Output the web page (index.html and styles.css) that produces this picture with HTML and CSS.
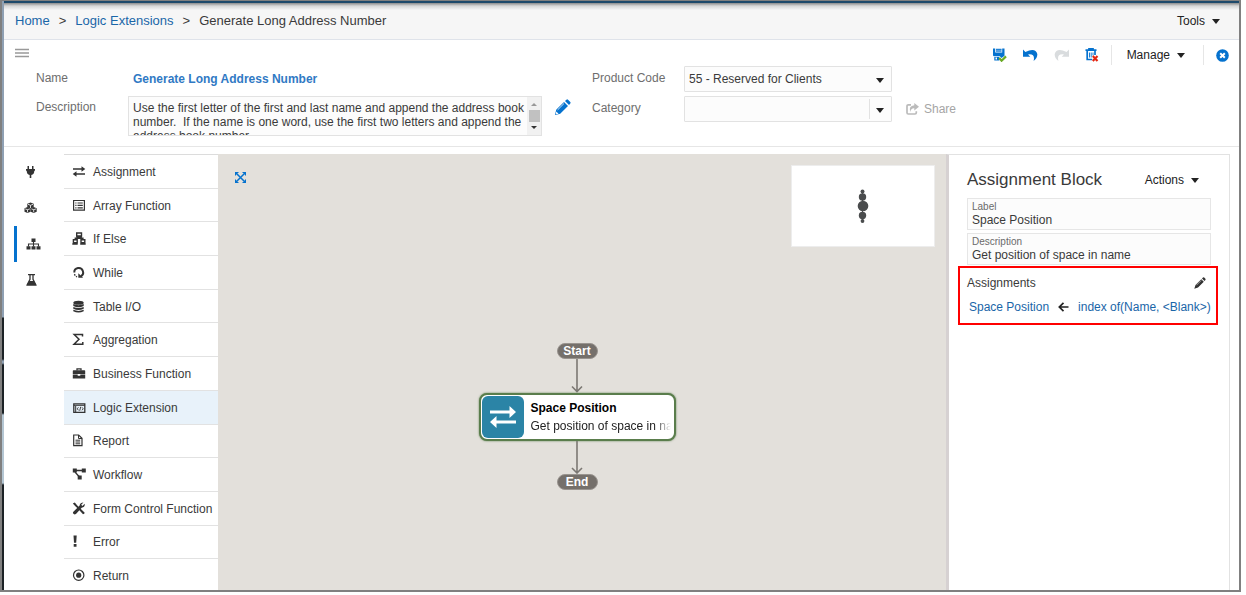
FILE: index.html
```html
<!DOCTYPE html>
<html lang="en">
<head>
<meta charset="utf-8">
<title>Logic Extensions</title>
<link rel="stylesheet" href="styles.css">
</head>
<body>
<div class="app">
  <header class="topbar">
    <nav class="crumbs" aria-label="Breadcrumb">
      <a href="#">Home</a><span class="sep">&gt;</span><a href="#">Logic Extensions</a><span class="sep">&gt;</span><span>Generate Long Address Number</span>
    </nav>
    <button class="menu-btn tools">Tools <i class="caret"></i></button>
  </header>

  <section class="details">
    <button class="icon-btn burger" aria-label="Menu"><svg width="14" height="10" viewBox="0 0 14 10"><path d="M0 1.500h14M0 5h14M0 8.500h14" stroke="#999" stroke-width="1.600"/></svg></button>
    <div class="fields">
      <span class="lbl">Name</span>
      <strong class="ext-name">Generate Long Address Number</strong>
      <label class="lbl" for="desc">Description</label>
      <div class="desc-row">
        <div class="desc-box">
          <textarea id="desc">Use the first letter of the first and last name and append the address book number.  If the name is one word, use the first two letters and append the address book number.</textarea>
          <div class="scroll" aria-hidden="true"><i class="up"></i><i class="thumb"></i><i class="down"></i></div>
        </div>
        <button class="icon-btn" aria-label="Edit description"><svg width="17" height="17" viewBox="0 0 17 17"><path d="M1 16l1.200-5.200L10 3l4 4-7.800 7.800zM11 2l1.400-1.300q.8-.7 1.600 0l2.300 2.300q.7.800 0 1.600L15 6z" fill="#0572ce"/><path d="M3.600 10.900L10 4.500" stroke="#fff" stroke-width=".8"/><path d="M2.300 12.400l2.300 2.300-2 .5-.8-.8z" fill="#fff"/></svg></button>
      </div>
    </div>
    <div class="codes">
      <label class="lbl" for="code">Product Code</label>
      <div class="sel"><select id="code"><option>55 - Reserved for Clients</option></select><i class="caret"></i></div>
      <label class="lbl" for="cat">Category</label>
      <div class="sel split"><select id="cat"><option></option></select><i class="caret"></i></div>
    </div>
    <button class="share"><svg width="13" height="12" viewBox="0 0 13 12"><path d="M5 1.900H2.300Q1 1.900 1 3.200V9.700Q1 11 2.300 11H9Q10.300 11 10.300 9.700V8.200" fill="none" stroke="#bbb" stroke-width="1.700"/><path d="M8.300 0L13 3.800 8.300 7.600V5.300Q5 5 4.300 9 2.200 3 8.300 2.300z" fill="#bbb"/></svg>Share</button>
    <div class="toolbar">
      <button class="icon-btn" aria-label="Save"><svg width="15" height="14" viewBox="0 0 15 14"><path d="M1 .5h2.200v4h7v-4h2.300v7.200L9.500 10 7.800 8.200H1.800L1 7.500z" fill="#0572ce"/><path d="M4 .5h5.500V4H4z" fill="#8fbfe8"/><path d="M4 1.500h5.500M4 3h5.500" stroke="#0572ce" stroke-width=".8"/><path d="M2.300 9h5v3.500h-5z" fill="#0572ce"/><path d="M3.500 9.500h1.500v2H3.500z" fill="#fff"/><path d="M7.200 10l2.400 2.700L14 8.400" fill="none" stroke="#6aaa25" stroke-width="2.200"/></svg></button>
      <button class="icon-btn" aria-label="Undo"><svg width="15" height="12" viewBox="0 0 15 12"><path d="M0 .500L2.400 2.900Q12.500-1.800 14.300 5 14.600 9 10.600 12 12.500 4.300 5 5.400L7.300 7.700H0z" fill="#0572ce"/></svg></button>
      <button class="icon-btn" aria-label="Redo" disabled><svg width="15" height="12" viewBox="0 0 15 12"><path d="M15 .500L12.600 2.900Q2.500-1.800.7 5 .4 9 4.400 12 2.500 4.300 10 5.400L7.700 7.700H15z" fill="#d9dcde"/></svg></button>
      <button class="icon-btn" aria-label="Delete"><svg width="14" height="14" viewBox="0 0 14 14"><path d="M.5 2.200h11M4 2V.7h4V2M2.200 2.500v9h5M10 2.500V7" fill="none" stroke="#0572ce" stroke-width="1.700"/><path d="M4.500 4.500v5M6.200 4.500v5M8 4.500v3" stroke="#0572ce" stroke-width=".9"/><path d="M7.800 8l4.700 5M12.500 8l-4.700 5" stroke="#e5250f" stroke-width="2.100"/></svg></button>
      <button class="menu-btn manage">Manage <i class="caret"></i></button>
      <button class="icon-btn" aria-label="Close"><svg width="13" height="13" viewBox="0 0 13 13"><circle cx="6.500" cy="6.500" r="6.300" fill="#0572ce"/><path d="M4.200 4.200l4.600 4.600M8.800 4.200L4.200 8.800" stroke="#fff" stroke-width="2"/></svg></button>
    </div>
  </section>

  <main class="work">
    <nav class="rail" aria-label="Sections">
      <button aria-label="Connections"><svg width="16" height="16" viewBox="0 0 16 16"><path d="M4.500 2H6v3.500H4.500zM9 2h1.500v3.500H9zM3 5h9v1.700h-.7q0 3.600-3 4.400V14H6.700v-2.900q-3-.8-3-4.400H3z" fill="#333"/></svg></button>
      <button aria-label="Objects"><svg width="16" height="16" viewBox="0 0 16 16"><g fill="#333"><path d="M7.500 2.500l3.200 1.200v3.600L7.500 8.700 4.300 7.300V3.700z"/><path d="M4.500 7l3.100 1.200v3.500L4.500 13l-3-1.300V8.200z"/><path d="M10.700 7l3 1.200v3.500L10.700 13l-3-1.300V8.200z"/></g><path d="M5 4.300l2.500 1 2.500-1M7.500 5.300V8M2.200 8.900l2.300.8 2.400-.8M4.500 9.700V12.300M8.400 8.900l2.300.8 2.300-.8M10.700 9.700v2.600" stroke="#fff" stroke-width=".8" fill="none"/></svg></button>
      <button class="on" aria-label="Logic"><svg width="16" height="16" viewBox="0 0 16 16"><path d="M6.500 2.500h4v3.500h-4zM1.500 10.200h4v3.300h-4zM6.500 10.200h4v3.300h-4zM11.500 10.200h4v3.300h-4z" fill="#333"/><path d="M8.500 6v4.500M3.500 10.500V8h10v2.500" fill="none" stroke="#333" stroke-width="1.100"/></svg></button>
      <button aria-label="Test"><svg width="16" height="16" viewBox="0 0 16 16"><path d="M5 2.600h7M7 3v4.300L4.200 12.900h8.600L10 7.300V3" fill="none" stroke="#333" stroke-width="1.300"/><path d="M6.100 9h4.800l2.600 4.500h-10z" fill="#333"/></svg></button>
    </nav>

    <ul class="blocks">
      <li><button><svg width="14" height="14" viewBox="0 0 14 14"><path d="M1 4h9M4 9h9" stroke="#333" stroke-width="1.700"/><path d="M9.500 1.200L13.300 4 9.500 6.800zM4.500 6.200L.7 9l3.800 2.800z" fill="#333"/></svg>Assignment</button></li>
      <li><button><svg width="14" height="14" viewBox="0 0 14 14"><path d="M1.600 1.500h10.800v9.600H1.600z" fill="none" stroke="#333" stroke-width="1.200"/><path d="M3.300 4h1.200M5.500 4h5.300M3.300 6.400h1.200M5.500 6.400h5.300M3.300 8.800h1.200M5.500 8.800h5.300" stroke="#333" stroke-width="1.200"/></svg>Array Function</button></li>
      <li><button><svg width="14" height="14" viewBox="0 0 14 14"><path d="M4.700 1h4.800v3H4.700zM1.400 7.800h3.800v3H1.400zM9 7.800h3.800v3H9zM7 4v2.200M3.300 7.800V6.200h7.600v1.600M4.300 4.900h5.600M.3 12h5.400M8.200 12h5.500" fill="none" stroke="#333" stroke-width="1.400"/></svg>If Else</button></li>
      <li><button><svg width="14" height="14" viewBox="0 0 14 14"><path d="M2.300 6.500a4.400 4.400 0 1 1 6.500 3.800" fill="none" stroke="#333" stroke-width="2"/><path d="M6.300 7.200v4.600h4.800z" fill="#333"/><path d="M2.400 8.100l.8 1.500M4 10.300l1 .7" stroke="#333" stroke-width="1.300"/></svg>While</button></li>
      <li><button><svg width="14" height="14" viewBox="0 0 14 14"><g fill="#333"><ellipse cx="6.500" cy="2.700" rx="5.200" ry="2"/><path d="M1.300 4q5.200 2.300 10.400 0v1.900q-5.200 2.600-10.400 0zM1.300 6.900q5.200 2.300 10.400 0v1.900q-5.200 2.600-10.400 0zM1.300 9.800q5.200 2.300 10.400 0v1.400q-5.200 2.600-10.400 0z"/></g></svg>Table I/O</button></li>
      <li><button><svg width="14" height="14" viewBox="0 0 14 14"><path d="M10.500 3.500V1.500H2.200L7 6.200 2 11.300h8.800V9" fill="none" stroke="#333" stroke-width="1.500"/></svg>Aggregation</button></li>
      <li><button><svg width="14" height="14" viewBox="0 0 14 14"><path d="M5 3.500V1.800h4v1.700" fill="none" stroke="#333" stroke-width="1.300"/><path d="M1.500 3.200h11q.7 0 .7.700v3H.8v-3q0-.7.700-.7zM.8 7.600h4.900v1.100h2.600V7.600h4.900v3.900H.8z" fill="#333"/></svg>Business Function</button></li>
      <li class="active"><button><svg width="14" height="14" viewBox="0 0 14 14"><path d="M1.800 2.800h11v8.500h-11z" fill="none" stroke="#333" stroke-width="1.300"/><path d="M1.800 4.300h11M3.700 5v6" stroke="#333"/><path d="M6.400 6.300L5.300 7.800l1.100 1.500M10 6.300l1.200 1.500L10 9.300M8.700 5.800l-1 4" fill="none" stroke="#333" stroke-width=".9"/></svg>Logic Extension</button></li>
      <li><button><svg width="14" height="14" viewBox="0 0 14 14"><path d="M1.700 1h5L10 4.300v7.400H1.700z" fill="none" stroke="#333" stroke-width="1.200"/><path d="M6.500 1v3.500H10M3.500 6.200h4.700M3.500 8h4.700M3.500 9.800h4.700" fill="none" stroke="#333"/></svg>Report</button></li>
      <li><button><svg width="14" height="14" viewBox="0 0 14 14"><path d="M.8.500h4v4h-4zM9.800.500h4v4h-4zM5.700 7.500h4v4h-4z" fill="#333"/><path d="M4 2.500h6M3 4l4 4.500" stroke="#333" stroke-width="1.300"/></svg>Workflow</button></li>
      <li><button><svg width="14" height="14" viewBox="0 0 14 14"><path d="M.8 1.500l2-1 2.500 3L7.100 5.200l5.400 5.300q.5 1.700-1.500 1.700L5.800 6.500 3.600 4.500z" fill="#333"/><path d="M11.500.500L9.200 2.800l1.200 1.200 2.300-2.300q.5 3.600-3 4l-5.500 6q-1.800 1.500-3-.1-.8-1.200.7-2.400l5.600-5.500q.6-3.200 4-3.200z" fill="#333"/></svg>Form Control Function</button></li>
      <li><button><svg width="14" height="14" viewBox="0 0 14 14"><path d="M1.500.500h3.200l-.5 7.200H2zM1.700 9h2.800v2.700H1.700z" fill="#333"/></svg>Error</button></li>
      <li><button><svg width="14" height="14" viewBox="0 0 14 14"><circle cx="6.700" cy="6.200" r="5.200" fill="none" stroke="#333" stroke-width="1.200"/><circle cx="6.700" cy="6.200" r="2.600" fill="#333"/></svg>Return</button></li>
    </ul>

    <section class="canvas" aria-label="Flow diagram">
      <button class="icon-btn fit" aria-label="Fit"><svg width="11" height="11" viewBox="0 0 11 11"><path d="M2 2l7 7M9 2L2 9" stroke="#0572ce" stroke-width="1.500"/><path d="M0 0h4L0 4zM11 0v4L7 0zM0 11V7l4 4zM11 11H7l4-4z" fill="#0572ce"/></svg></button>
      <div class="minimap"><svg width="14" height="34" viewBox="0 0 14 34"><path d="M6.500 2v30" stroke="#4a4c4d"/><g fill="#4a4c4d"><circle cx="6.500" cy="2.500" r="2"/><circle cx="6.500" cy="8" r="3.700"/><circle cx="7" cy="17" r="5.300"/><circle cx="6.500" cy="26.500" r="3.700"/><circle cx="6.500" cy="32" r="1.900"/></g></svg></div>
      <div class="flow">
        <div class="pill">Start</div>
        <svg class="link" width="12" height="34" viewBox="0 0 12 34"><path d="M6 0v33M1 27.500l5 5 5-5" fill="none" stroke="#7c7873" stroke-width="1.600"/></svg>
        <div class="node">
          <span class="node-ico"><svg width="28" height="22" viewBox="0 0 28 22"><path d="M1 6h20M7 16h20" stroke="#fff" stroke-width="3"/><path d="M20.500 0L27 6l-6.500 6zM7.500 10L1 16l6.500 6z" fill="#fff"/></svg></span>
          <span class="node-txt"><b>Space Position</b><span class="fade">Get position of space in name</span></span>
        </div>
        <svg class="link" width="12" height="33" viewBox="0 0 12 33"><path d="M6 0v32M1 27l5 5 5-5" fill="none" stroke="#7c7873" stroke-width="1.600"/></svg>
        <div class="pill">End</div>
      </div>
    </section>

    <aside class="panel">
      <div class="panel-head">
        <h1>Assignment Block</h1>
        <button class="menu-btn">Actions <i class="caret"></i></button>
      </div>
      <div class="inputs">
        <label class="inp">Label<input type="text" value="Space Position"></label>
        <label class="inp">Description<input type="text" value="Get position of space in name"></label>
      </div>
      <section class="assign">
        <div class="assign-head"><span>Assignments</span>
          <button class="icon-btn" aria-label="Edit assignments"><svg width="12" height="12" viewBox="0 0 12 12"><path d="M.3 11.700L1.500 8 7.300 2.200l2.500 2.500L4 10.500zM8 1.500L9 .6q.6-.5 1.200 0l1.200 1.200q.5.600 0 1.200l-.9 1z" fill="#333"/><path d="M2.500 8.200l4.700-4.700" stroke="#fff" stroke-width=".5"/></svg></button></div>
        <div class="assign-row"><a href="#">Space Position</a><svg width="11" height="10" viewBox="0 0 11 10"><path d="M10.500 5H1.500M5.500.8L1.300 5l4.200 4.200" fill="none" stroke="#222" stroke-width="1.700"/></svg><a href="#">index of(Name, &lt;Blank&gt;)</a></div>
      </section>
    </aside>
  </main>
</div>
</body>
</html>
```
FILE: styles.css
```css
* { box-sizing: border-box; }
body {
  margin: 0;
  padding: 0 5px 3px 0;
  height: 100vh;
  overflow: hidden;
  background: #fff;
  font: 12px/14px "Liberation Sans", Arial, sans-serif;
  color: #3a3a3a;
}
button, input, select, textarea { font: inherit; color: inherit; margin: 0; }
button { border: 0; padding: 0; background: none; }
a { color: #1a66a8; text-decoration: none; }
svg { display: block; flex: none; }

.app {
  height: 100%;
  display: flex;
  flex-direction: column;
  border: 2px solid #808080;
  border-top-width: 1px;
  padding-left: 2px;
  background: linear-gradient(#8fa0b3 0 316px, #1c2226 317px 358px, #8fa0b3 360px 362px, #1c2226 364px 412px, #b4c6d3 414px 482px, #1c2226 484px) 0 0 / 2px 100% no-repeat #fff;
}

.topbar {
  display: flex;
  justify-content: space-between;
  align-items: center;
  height: 39px;
  padding: 0 19px 0 11px;
  border-top: 2px solid #1f4a6b;
  border-bottom: 1px solid #dfe3ea;
  background: linear-gradient(#8c8c8c, #d8d8d8 3px, #f6f6f6 7px);
  flex: none;
}
.crumbs { display: flex; font-size: 13px; line-height: 16px; }
.sep { margin: 0 9px; }
.menu-btn { display: flex; align-items: center; gap: 7px; color: #222; }
.caret {
  width: 0;
  border: 4px solid transparent;
  border-top: 5px solid #222;
  border-bottom: 0;
}

.details {
  position: relative;
  display: flex;
  align-items: flex-start;
  height: 107px;
  border-bottom: 1px solid #e6e6e6;
  background: #fff;
  flex: none;
}
.burger { margin: 8px 7px 0 11px; }
.lbl { color: #6e6e6e; }
.fields {
  display: grid;
  grid-template-columns: 92px auto;
  grid-template-rows: 25px 40px;
  padding-top: 31px;
}
.fields label.lbl { padding-top: 4px; }
.ext-name { padding-left: 5px; line-height: 16px; color: #3079c4; }
.desc-row { display: flex; align-items: flex-start; gap: 12px; }
.desc-row .icon-btn { margin-top: 3px; }
.desc-box { display: flex; width: 414px; height: 40px; border: 1px solid #e2e2e2; background: #fcfcfc; }
.desc-box textarea {
  flex: 1;
  min-width: 0;
  resize: none;
  overflow: hidden;
  border: 0;
  padding: 4px 0 0 4px;
  background: none;
  line-height: 14px;
}
.scroll {
  display: flex;
  flex-direction: column;
  align-items: center;
  justify-content: space-between;
  width: 14px;
  padding: 6px 0;
  background: #f1f1f1;
}
.up { border: 3px solid transparent; border-bottom-color: #999; border-top: 0; }
.thumb { width: 11px; height: 12px; background: #c1c1c1; }
.down { border: 3px solid transparent; border-top-color: #333; border-bottom: 0; }
.codes {
  display: grid;
  grid-template-columns: 92px 208px;
  grid-auto-rows: 26px;
  row-gap: 4px;
  padding-top: 26px;
  margin-left: 21px;
}
.codes .lbl { padding-top: 5px; }
.sel { position: relative; }
.sel select {
  appearance: none;
  width: 100%;
  height: 26px;
  padding: 0 24px 0 4px;
  border: 1px solid #e2e2e2;
  border-radius: 1px;
  background: #fcfcfc;
}
.sel .caret { position: absolute; right: 8px; top: 12px; pointer-events: none; }
.split::after { content: ""; position: absolute; right: 22px; top: 3px; bottom: 3px; width: 1px; background: #e2e2e2; }
.share { display: flex; align-items: center; gap: 5px; margin: 62px 0 0 14px; color: #a5a5a5; }
.toolbar { position: absolute; top: 4px; right: 10px; display: flex; align-items: center; gap: 16px; height: 22px; }
.manage { height: 20px; padding: 0 18px 0 15px; margin: 0 -4px; border: solid #e6e6e6; border-width: 0 1px; }

.work {
  display: grid;
  grid-template-columns: 60px 154px minmax(0, 1fr) 284px;
  flex: 1;
  min-height: 0;
  overflow: hidden;
  padding: 7px 9px 0 0;
}
.rail button { display: flex; align-items: center; width: 100%; height: 36px; padding-left: 19px; }
.rail .on { margin-left: 10px; width: 50px; padding-left: 8px; border-left: 3px solid #0572ce; }
.blocks {
  display: grid;
  grid-auto-rows: 1fr;
  list-style: none;
  margin: 0 0 -3px;
  padding: 0;
  border-top: 1px solid #dcdcdc;
  min-height: 0;
}
.blocks li { display: flex; border-bottom: 1px solid #e2e2e2; }
.blocks button { display: flex; align-items: center; gap: 7px; width: 100%; padding: 1px 0 0 8px; text-align: left; }
.blocks .active { background: #e8f2fa; }

.canvas { position: relative; overflow: hidden; background: #e3e0db; }
.fit { position: absolute; left: 17px; top: 18px; }
.minimap {
  position: absolute;
  right: 11px;
  top: 11px;
  width: 144px;
  height: 82px;
  display: grid;
  place-items: center;
  border: 1px solid #ededed;
  background: #fff;
}
.flow { position: absolute; left: 260px; top: 189px; width: 198px; display: flex; flex-direction: column; align-items: center; }
.pill {
  width: 41px;
  height: 16px;
  border: 1px solid #99948f;
  border-radius: 8px;
  background: #75706b;
  color: #fff;
  font-weight: bold;
  line-height: 14px;
  text-align: center;
}
.node {
  display: flex;
  align-items: center;
  gap: 7px;
  width: 197px;
  height: 48px;
  padding: 1px 3px 1px 1px;
  border: 2px solid #5a7d4c;
  border-radius: 8px;
  background: #fff;
  color: #000;
  box-shadow: 0 0 2px #5a7d4c;
}
.node-ico { display: grid; place-items: center; flex: none; width: 42px; height: 42px; border-radius: 6px; background: #2b84a6; }
.node-txt { display: grid; gap: 4px; min-width: 0; }
.fade { overflow: hidden; white-space: nowrap; color: #222; mask-image: linear-gradient(90deg, #000 88%, transparent); }

.panel { min-width: 0; padding: 15px 8px 0; border: 1px solid #e2e2e2; border-left: 3px solid #d6d1d2; border-bottom: 0; }
.panel-head { display: flex; justify-content: space-between; align-items: center; padding: 0 22px 0 10px; margin-bottom: 8px; }
.panel h1 { margin: 0; font-size: 17px; line-height: 20px; font-weight: normal; }
.inputs { display: grid; gap: 3px; margin: 0 10px 1px; }
.inp {
  display: block;
  height: 32px;
  padding: 2px 4px 0;
  border: 1px solid #e6e6e6;
  background: #fcfcfc;
  font-size: 10px;
  line-height: 12px;
  color: #6a6a6a;
}
.inp input { display: block; width: 100%; height: 14px; border: 0; padding: 0; background: none; font-size: 12px; color: #3a3a3a; }
.assign { margin: 0 3px 0 1px; border: 2px solid #f00; padding: 8px 10px 9px 7px; }
.assign-head { display: flex; justify-content: space-between; margin-bottom: 10px; }
.assign-row { display: flex; align-items: center; gap: 9px; padding-left: 2px; white-space: nowrap; }
```
